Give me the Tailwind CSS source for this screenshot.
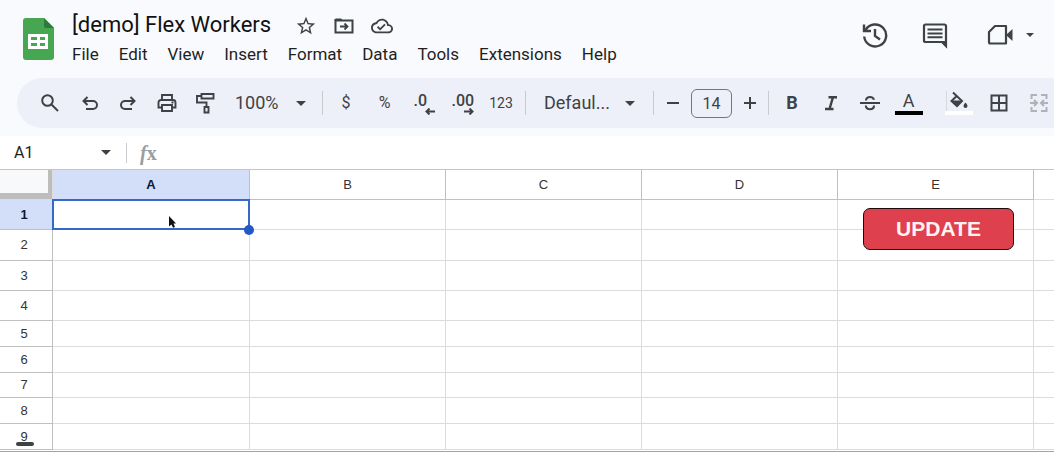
<!DOCTYPE html>
<html lang="en">

<head>
    <meta charset="UTF-8">
    <meta name="viewport" content="width=device-width, initial-scale=1.0">
    <title>[demo] Flex Workers</title>
    <script src="https://cdn.jsdelivr.net/npm/@tailwindcss/browser@4"></script>
</head>

<body class="h-screen flex flex-col overflow-hidden bg-[#f9fafd] font-['Roboto',sans-serif] text-[#1f1f1f]">

    <!-- title and menus -->
    <header class="flex items-start pt-2 pl-[23px] pr-5 pb-[10px] text-[#3f4245]">
        <svg class="mt-[10px] w-[31px] h-[42px] shrink-0" viewBox="0 0 31 42" aria-label="Sheets">
            <path fill="#46a651" d="M3 0h18l10 10v29a3 3 0 0 1-3 3H3a3 3 0 0 1-3-3V3a3 3 0 0 1 3-3z" />
            <path fill="#2c7a3b" d="M21 0l10 10H23a2 2 0 0 1-2-2z" />
            <path fill="#fff" fill-rule="evenodd" d="M5 16h20v15H5zM8 19v3h6v-3zm9 0v3h5v-3zM8 25v3h6v-3zm9 0v3h5v-3z" />
        </svg>
        <div class="ml-[18px]">
            <div class="flex items-center h-8">
                <h1 class="text-[22px] whitespace-nowrap text-[#111]">[demo] Flex Workers</h1>
                <button class="ml-6 mt-1" aria-label="Star">
                    <svg class="w-[22px] h-[22px]" viewBox="0 0 24 24" fill="currentColor"><path d="M22 9.240l-7.190-.62L12 2 9.190 8.630 2 9.240l5.460 4.730L5.820 21 12 17.270 18.180 21l-1.630-7.030L22 9.240zM12 15.400l-3.760 2.270 1-4.280-3.320-2.880 4.380-.38L12 6.100l1.710 4.040 4.380.38-3.320 2.880 1 4.280L12 15.400z" /></svg>
                </button>
                <button class="ml-4 mt-1" aria-label="Move">
                    <svg class="w-[22px] h-[22px]" viewBox="0 0 22 22" fill="none" stroke="currentColor" stroke-width="2"><path d="M2.500 5.500h17v12h-17z" /><path fill="currentColor" stroke="none" d="M1.500 5a1.500 1.500 0 0 1 1.500-1.500h5l2.500 2.500h-9z" /><path d="M7 11.500h7M11.500 8.500l3 3-3 3" stroke-width="1.800" /></svg>
                </button>
                <button class="ml-4 mt-1" aria-label="Saved to Drive">
                    <svg class="w-[22px] h-[22px]" viewBox="0 0 24 24" fill="currentColor"><path d="M19.350 10.040C18.670 6.590 15.640 4 12 4 9.110 4 6.600 5.640 5.350 8.040 2.340 8.360 0 10.910 0 14c0 3.310 2.690 6 6 6h13c2.760 0 5-2.240 5-5 0-2.640-2.050-4.780-4.650-4.960zM19 18H6c-2.210 0-4-1.790-4-4 0-2.050 1.530-3.760 3.560-3.970l1.070-.11.5-.95C8.080 7.140 9.940 6 12 6c2.620 0 4.880 1.860 5.390 4.430l.3 1.500 1.530.11c1.560.1 2.780 1.410 2.780 2.960 0 1.650-1.350 3-3 3zm-9-3.820l-2.090-2.090L6.500 13.500 10 17l6.010-6.010-1.410-1.410z" /></svg>
                </button>
            </div>
            <nav class="flex gap-5 text-[17px] leading-7 text-[#1f1f1f]">
                <button>File</button>
                <button>Edit</button>
                <button>View</button>
                <button>Insert</button>
                <button>Format</button>
                <button>Data</button>
                <button>Tools</button>
                <button>Extensions</button>
                <button>Help</button>
            </nav>
        </div>
        <div class="ml-auto mt-[13px] flex items-center">
            <button aria-label="Version history">
                <svg class="w-7 h-7" viewBox="0 0 28 28" fill="none" stroke="currentColor" stroke-width="2.400"><path d="M4.500 9.200a11 11 0 1 1-1.300 6.300" /><path d="M3 3.500v6.500h7" /><path d="M14 8v7l5 3.500" /></svg>
            </button>
            <button class="ml-8" aria-label="Comments">
                <svg class="w-7 h-7" viewBox="0 0 28 28" fill="none" stroke="currentColor" stroke-width="2.200"><path d="M25 25V5a1.500 1.500 0 0 0-1.500-1.500h-19A1.500 1.500 0 0 0 3 5v14.500A1.500 1.500 0 0 0 4.500 21H21z" /><path fill="currentColor" stroke="none" d="M19.500 20H26v7z" /><path d="M6.500 8.500h15M6.500 12.400h15M6.500 16.300h15" stroke-width="2" /></svg>
            </button>
            <button class="ml-[38px] flex items-center gap-3" aria-label="Join a call">
                <svg class="w-[27px] h-7" viewBox="0 0 27 28" fill="none" stroke="currentColor" stroke-width="2.200"><path d="M8 5h11v17.500H3.500a1.500 1.500 0 0 1-1.500-1.500V11z" stroke-linejoin="round" /><path fill="currentColor" stroke="none" d="M19 14l6.500-6v12z" /></svg>
                <svg class="w-2 h-1" viewBox="0 0 10 5" preserveAspectRatio="none" fill="currentColor"><path d="M0 0h10L5 5z" /></svg>
            </button>
        </div>
    </header>

    <!-- toolbar -->
    <div class="ml-[17px] h-[50px] shrink-0 flex items-center rounded-l-full bg-[#edf0f8] overflow-hidden text-[#3f4245] *:shrink-0">
        <button class="ml-3 w-[42px] flex justify-center" aria-label="Search">
            <svg class="w-5 h-5" viewBox="0 0 20 20" fill="none" stroke="currentColor" stroke-width="2"><circle cx="7.500" cy="7.500" r="5.300" /><path d="M11.500 11.500l6.500 6.500" /></svg>
        </button>
        <button class="w-[38px] flex justify-center" aria-label="Undo">
            <svg class="w-5 h-5" viewBox="0 0 20 20" fill="none" stroke="currentColor" stroke-width="2"><path d="M4 8h9a4 4 0 0 1 0 8H6M7.500 4L3.500 8l4 4" /></svg>
        </button>
        <button class="w-[38px] flex justify-center" aria-label="Redo">
            <svg class="w-5 h-5" viewBox="0 0 20 20" fill="none" stroke="currentColor" stroke-width="2"><path d="M16 8H7a4 4 0 0 0 0 8h7M12.500 4l4 4-4 4" /></svg>
        </button>
        <button class="w-[39px] flex justify-center" aria-label="Print">
            <svg class="w-5 h-5" viewBox="0 0 20 20" fill="none" stroke="currentColor" stroke-width="1.900"><path d="M5 7V2h10v5M5 14.500H1.500V9.500A2.500 2.500 0 0 1 4 7h12a2.500 2.500 0 0 1 2.500 2.500v5H15M5 12h10v6H5z" /><path d="M14.500 9.500h2" /></svg>
        </button>
        <button class="w-[38px] flex justify-center" aria-label="Paint format">
            <svg class="w-5 h-[22px]" viewBox="0 0 20 22" fill="none" stroke="currentColor" stroke-width="1.900"><path d="M6.500 2h12v4.500h-12zM6.500 4H2v6.500h9.500V15M9.500 15h4v5.500h-4z" /></svg>
        </button>
        <div class="relative ml-[11px] w-[87px]">
            <select class="w-full appearance-none bg-transparent text-lg leading-7" aria-label="Zoom">
                <option>100%</option>
            </select>
            <svg class="pointer-events-none absolute right-4 top-3 w-[10px] h-[5px]" viewBox="0 0 10 5" fill="currentColor"><path d="M0 0h10L5 5z" /></svg>
        </div>
        <div class="w-px h-6 bg-[#c7cacf]"></div>
        <div class="ml-1 flex items-center text-base">
            <button class="w-[38px]" aria-label="Currency">$</button>
            <button class="w-[39px]" aria-label="Percent">%</button>
            <button class="w-[39px] flex justify-center" aria-label="Decrease decimal places">
                <span class="relative h-6 w-5 text-left text-base leading-5 font-medium">.0
                    <svg class="absolute -right-px bottom-0 w-[10px] h-[7px]" viewBox="0 0 10 7" fill="none" stroke="currentColor" stroke-width="2"><path d="M10 3.500H2M4.500 .5l-3 3 3 3" /></svg>
                </span>
            </button>
            <button class="w-[39px] flex justify-center" aria-label="Increase decimal places">
                <span class="relative h-6 w-[22px] text-left text-base leading-5 font-medium">.00
                    <svg class="absolute right-0 bottom-0 w-[10px] h-[7px]" viewBox="0 0 10 7" fill="none" stroke="currentColor" stroke-width="2"><path d="M0 3.500h8M5.500 .5l3 3-3 3" /></svg>
                </span>
            </button>
            <button class="w-[38px] text-sm" aria-label="More formats">123</button>
        </div>
        <div class="ml-[5px] w-px h-6 bg-[#c7cacf]"></div>
        <div class="relative ml-[18px] w-[109px]">
            <select class="w-full appearance-none bg-transparent text-lg leading-7" aria-label="Font">
                <option>Defaul...</option>
            </select>
            <svg class="pointer-events-none absolute right-[18px] top-3 w-[10px] h-[5px]" viewBox="0 0 10 5" fill="currentColor"><path d="M0 0h10L5 5z" /></svg>
        </div>
        <div class="w-px h-6 bg-[#c7cacf]"></div>
        <button class="w-[37px] flex justify-center" aria-label="Decrease font size">
            <svg class="w-3 h-3" viewBox="0 0 12 12" stroke="currentColor" stroke-width="2"><path d="M0 6h12" /></svg>
        </button>
        <input class="w-[41px] h-[29px] rounded-md border border-[#747775] bg-transparent text-center text-base" type="text" value="14" aria-label="Font size">
        <button class="w-9 flex justify-center" aria-label="Increase font size">
            <svg class="w-3 h-3" viewBox="0 0 12 12" stroke="currentColor" stroke-width="2"><path d="M0 6h12M6 0v12" /></svg>
        </button>
        <div class="w-px h-6 bg-[#c7cacf]"></div>
        <div class="ml-1 flex items-center">
            <button class="w-[38px] text-lg font-bold" aria-label="Bold">B</button>
            <button class="w-[39px] flex justify-center" aria-label="Italic">
                <svg class="w-[14px] h-4" viewBox="0 0 14 16" fill="none" stroke="currentColor" stroke-width="2.400"><path d="M4.500 2.200H13M1 14h8.500M9 2.200L5.500 14" /></svg>
            </button>
            <button class="w-[39px] flex justify-center" aria-label="Strikethrough">
                <svg class="w-5 h-4" viewBox="0 0 20 16" fill="none" stroke="currentColor" stroke-width="2.100"><path d="M0 8h20M6 5.500C6 3 8 2 10 2s3.500 1 4 2.800M5.800 10.500C6 13 8 14.200 10 14.200s4-1 4-3.700" /></svg>
            </button>
            <button class="w-[39px] flex flex-col items-center" aria-label="Text color">
                <span class="text-lg leading-5">A</span>
                <span class="w-7 h-1 bg-black"></span>
            </button>
        </div>
        <div class="ml-[18px] w-px h-6 bg-[#d5d8dd]"></div>
        <div class="-ml-2 flex items-center">
            <button class="w-10 flex flex-col items-center" aria-label="Fill color">
                <svg class="w-[18px] h-5" viewBox="0 0 18 20" fill="none" stroke="currentColor" stroke-width="2"><path d="M3 1.500l9 8.500-5 5-5.500-5L7 4.800" /><path fill="currentColor" stroke="none" d="M1.500 9.500h11L7 15zM15.500 11.500c1.300 1.700 2 2.500 2 3.500a2 2 0 0 1-4 0c0-1 .7-1.800 2-3.500z" /></svg>
                <span class="w-7 h-1 bg-white"></span>
            </button>
            <button class="w-10 flex justify-center" aria-label="Borders">
                <svg class="w-[18px] h-[18px]" viewBox="0 0 18 18" fill="none" stroke="currentColor" stroke-width="2"><path d="M1.500 1.500h15v15h-15zM9 1.500v15M1.500 9h15" /></svg>
            </button>
            <button class="w-10 flex justify-center text-[#afb2b6]" aria-label="Merge cells">
                <svg class="w-[18px] h-[18px]" viewBox="0 0 18 18" fill="none" stroke="currentColor" stroke-width="2"><path d="M7 1H1.500v4M7 17H1.500v-4M11 1h5.500v4M11 17h5.500v-4M0 9h6M4 6l3 3-3 3M18 9h-6M14 6l-3 3 3 3" /></svg>
            </button>
        </div>
    </div>

    <!-- formula bar -->
    <div class="mt-2 h-[33px] shrink-0 flex items-center bg-white text-[#3f4245]">
        <input class="ml-[14px] w-[87px] text-base text-[#1f1f1f]" type="text" value="A1" aria-label="Name box">
        <button aria-label="Named ranges">
            <svg class="w-[10px] h-[5px]" viewBox="0 0 10 5" fill="currentColor"><path d="M0 0h10L5 5z" /></svg>
        </button>
        <div class="ml-[15px] w-px h-5 bg-[#c7cacf]"></div>
        <label for="formula" class="ml-[13px] font-['Liberation_Serif',serif] text-xl leading-5 font-bold text-[#9a9da1]"><i>f</i>x</label>
        <input id="formula" class="ml-4 flex-1 min-w-0 text-base outline-none" type="text">
    </div>

    <!-- sheet -->
    <main class="flex-1 min-h-0 overflow-hidden border-y border-t-[#c4c4c4] border-b-[#a3a3a3] bg-white">
        <table class="w-max table-fixed border-separate border-spacing-0 font-['Liberation_Sans',sans-serif] text-[13px] leading-4 text-[#333] [&_td]:border-r [&_td]:border-b [&_td]:border-[#dcdcdc] [&_td]:p-0 [&_th]:border-r [&_th]:border-b [&_th]:border-[#c0c0c0] [&_th]:p-0 [&_tbody_th]:pr-1 [&_th]:font-normal">
            <colgroup>
                <col class="w-[53px]">
                <col class="w-[197px]">
                <col class="w-[196px]" span="5">
            </colgroup>
            <thead>
                <tr class="h-[30px]">
                    <td class="bg-[#f8f9fa]"><div class="h-[29px] border-r-4 border-b-[6px] border-[#bdbdbd]"></div></td>
                    <th scope="col" class="bg-[#d3dff8]"><b class="text-[#0b1a33]">A</b></th>
                    <th scope="col">B</th>
                    <th scope="col">C</th>
                    <th scope="col">D</th>
                    <th scope="col">E</th>
                    <td></td>
                </tr>
            </thead>
            <tbody>
                <tr class="h-[30px]">
                    <th scope="row" class="bg-[#d3dff8]"><b class="text-[#0b1a33]">1</b></th>
                    <td class="relative">
                        <div class="absolute -inset-px border-2 border-[#3569c9]"></div>
                        <div class="absolute -right-[5px] -bottom-[6px] w-[10px] h-[10px] rounded-full bg-[#2458c4]"></div>
                        <svg class="absolute left-[116px] top-4 w-2 h-3" viewBox="0 0 8 12"><path fill="#111" d="M0 0l7 7.500H4.500L6 11l-2 .8L2.500 8.500 0 10.500z" /></svg>
                    </td>
                    <td></td>
                    <td></td>
                    <td></td>
                    <td class="relative">
                        <button class="absolute left-[25px] top-2 z-10 w-[151px] h-[42px] rounded-[7px] border border-[#1c0a0c] bg-[#df404d] text-[21px] leading-6 font-bold text-[#fff3f2]">UPDATE</button>
                    </td>
                    <td></td>
                </tr>
                <tr class="h-[31px]"><th scope="row">2</th><td></td><td></td><td></td><td></td><td></td><td></td></tr>
                <tr class="h-[30px]"><th scope="row">3</th><td></td><td></td><td></td><td></td><td></td><td></td></tr>
                <tr class="h-[30px]"><th scope="row">4</th><td></td><td></td><td></td><td></td><td></td><td></td></tr>
                <tr class="h-[26px]"><th scope="row">5</th><td></td><td></td><td></td><td></td><td></td><td></td></tr>
                <tr class="h-[26px]"><th scope="row">6</th><td></td><td></td><td></td><td></td><td></td><td></td></tr>
                <tr class="h-[25px]"><th scope="row">7</th><td></td><td></td><td></td><td></td><td></td><td></td></tr>
                <tr class="h-[26px]"><th scope="row">8</th><td></td><td></td><td></td><td></td><td></td><td></td></tr>
                <tr class="h-[26px]">
                    <th scope="row" class="relative">9<div class="absolute left-4 bottom-[3px] w-[18px] h-1 rounded-full bg-[#3f4245]"></div></th>
                    <td></td><td></td><td></td><td></td><td></td><td></td>
                </tr>
            </tbody>
        </table>
    </main>

</body>

</html>
